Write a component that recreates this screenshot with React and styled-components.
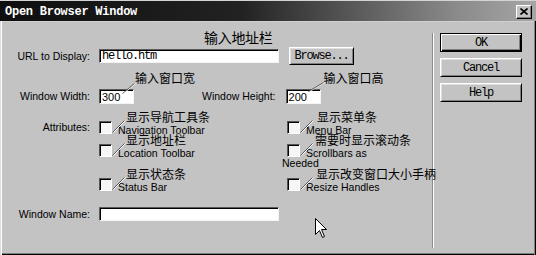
import React from "react";
import styled, { createGlobalStyle } from "styled-components";

const GlobalStyle = createGlobalStyle`
  html, body {
    margin: 0;
    padding: 0;
    background: #c3c3c3;
  }
  body {
    width: 536px;
    height: 255px;
    overflow: hidden;
  }
`;

const Window = styled.div`
  position: relative;
  width: 536px;
  height: 255px;
  display: flex;
  flex-direction: column;
  background: #c3c3c3;
  font-family: "Liberation Sans", Arial, sans-serif;
  font-size: 10.5px;
  color: #000;
  overflow: hidden;
`;

const TitleBar = styled.div`
  height: 21px;
  box-sizing: border-box;
  border-top: 1px solid #d4d4d4;
  background: linear-gradient(to right, #0e0e0e 0%, #222 45%, #8a8a8a 85%, #a6a6a6 100%);
  display: flex;
  align-items: center;
  justify-content: space-between;
  padding: 1px 4px 0 5px;
`;

const Title = styled.span`
  color: #fff;
  font-family: "Liberation Mono", "Courier New", monospace;
  font-weight: bold;
  font-size: 12px;
  letter-spacing: -0.25px;
`;

const CloseButton = styled.div`
  width: 16px;
  height: 14px;
  box-sizing: border-box;
  background: #c3c3c3;
  border: 1px solid;
  border-color: #fff #000 #000 #fff;
  box-shadow: inset -1px -1px #808080;
  display: flex;
  align-items: center;
  justify-content: center;
`;

const Body = styled.div`
  flex: 1;
  display: flex;
  box-shadow: inset 1px 0 #dcdcdc, inset 2px 0 #fff, inset -1px 0 #000,
    inset -2px 0 #808080, inset 0 -1px #000, inset 0 -2px #808080,
    inset 0 1px #d0d0d0;
`;

const Form = styled.div`
  width: 432px;
  box-sizing: border-box;
  padding-top: 26px;
`;

const Row = styled.div`
  display: flex;
  align-items: ${(p) => (p.$start ? "flex-start" : "center")};
  height: ${(p) => (p.$h ? `${p.$h}px` : "auto")};
  margin-top: ${(p) => p.$top || 0}px;
`;

const Label = styled.span`
  width: ${(p) => (p.$inline ? "auto" : "90px")};
  text-align: right;
  margin-left: ${(p) => p.$left || 0}px;
  margin-right: ${(p) => p.$right ?? 9}px;
  line-height: 13px;
  white-space: nowrap;
`;

const Field = styled.div`
  position: relative;
  width: ${(p) => p.$w}px;
  height: ${(p) => p.$h}px;
  box-sizing: border-box;
  background: #fff;
  border: 1px solid;
  border-color: #5a5a5a #f4f4f4 #f4f4f4 #5a5a5a;
  box-shadow: inset 1px 1px #000;
  padding: 0 0 0 2px;
  display: flex;
  align-items: center;
  font-family: ${(p) =>
    p.$mono ? '"Liberation Mono", "Courier New", monospace' : '"Liberation Sans", Arial, sans-serif'};
  font-size: ${(p) => (p.$mono ? "12px" : "11px")};
  letter-spacing: ${(p) => (p.$mono ? "-1.2px" : "0")};
`;

const Button = styled.div`
  width: ${(p) => p.$w}px;
  height: ${(p) => p.$h}px;
  box-sizing: border-box;
  background: #c3c3c3;
  border: 1px solid;
  border-color: ${(p) => (p.$default ? "#000" : "#fff #000 #000 #fff")};
  box-shadow: ${(p) =>
    p.$default
      ? "inset 1px 1px #fff, inset -1px -1px #000, inset -2px -2px #808080"
      : "inset 1px 1px #dfdfdf, inset -1px -1px #808080"};
  display: flex;
  align-items: center;
  justify-content: center;
  font-family: "Liberation Mono", "Courier New", monospace;
  font-size: 12px;
  letter-spacing: -1.2px;
  margin-left: ${(p) => p.$left || 0}px;
`;

const Note = styled.span`
  position: absolute;
  left: ${(p) => p.$x}px;
  top: ${(p) => p.$y}px;
  font-family: "Noto Sans CJK SC", sans-serif;
  font-size: ${(p) => p.$size || 12}px;
  line-height: 1;
  letter-spacing: ${(p) => (p.$size ? "-0.3px" : "0")};
  white-space: nowrap;
  color: #000;
`;

const Leader = styled.svg`
  position: absolute;
  left: ${(p) => p.$x}px;
  top: ${(p) => p.$y}px;
  overflow: visible;
`;

const AttrGrid = styled.div`
  display: grid;
  grid-template-columns: 188px 110px;
  grid-template-rows: 23px 34px 14px;
  margin-left: -5px;
`;

const Cell = styled.div`
  position: relative;
  padding-top: 4px;
  line-height: 10px;
  align-self: start;
`;

const Check = styled.span`
  float: left;
  width: 13px;
  height: 13px;
  box-sizing: border-box;
  margin: -4px 6px 0 5px;
  background: #f6f6f6;
  border: 1px solid;
  border-color: #555 #fff #fff #555;
  box-shadow: inset 1px 1px #000;
`;

const Separator = styled.div`
  width: 1px;
  height: 215px;
  margin-top: 12px;
  background: #8a8a8a;
  border-right: 1px solid #fff;
`;

const Buttons = styled.div`
  display: flex;
  flex-direction: column;
  gap: 6px;
  padding-top: 12px;
  margin-left: 6px;
`;

const Pointer = styled.svg`
  position: absolute;
  left: 315px;
  top: 218px;
`;

const LeaderLine = ({ x, y, w, h }) => (
  <Leader $x={x} $y={y} width={w} height={h}>
    <line x1={1.5} y1={h - 0.5} x2={w + 0.5} y2={0.5} stroke="#fff" strokeWidth="1" />
    <line x1={0.5} y1={h - 0.5} x2={w - 0.5} y2={0.5} stroke="#5a5a5a" strokeWidth="1" />
  </Leader>
);

const Attr = ({ note, children, noteX }) => (
  <Cell>
    <Check />
    <LeaderLine x={18} y={-1} w={13} h={13} />
    <Note $x={noteX} $y={-10}>
      {note}
    </Note>
    {children}
  </Cell>
);

export default function App() {
  return (
    <Window>
      <GlobalStyle />
      <TitleBar>
        <Title>Open Browser Window</Title>
        <CloseButton>
          <svg width="8" height="7" viewBox="0 0 8 7">
            <path d="M0.5 0.5 L7.5 6.5 M7.5 0.5 L0.5 6.5" stroke="#000" strokeWidth="1.6" />
          </svg>
        </CloseButton>
      </TitleBar>
      <Body>
        <Form>
          <Row $h={18}>
            <Label>URL to Display:</Label>
            <Field $w={180} $h={14} $mono>
              hello.htm
              <Note $x={104} $y={-20} $size={14}>
                输入地址栏
              </Note>
            </Field>
            <Button $w={65} $h={18} $left={10}>
              Browse...
            </Button>
          </Row>
          <Row $h={15} $top={24}>
            <Label>Window Width:</Label>
            <Field $w={35} $h={15}>
              300
              <Note $x={35} $y={-18}>
                输入窗口宽
              </Note>
              <LeaderLine x={22} y={-7} w={13} h={11} />
            </Field>
            <Label $inline $left={68} $right={10}>
              Window Height:
            </Label>
            <Field $w={35} $h={15}>
              200
              <Note $x={37} $y={-18}>
                输入窗口高
              </Note>
              <LeaderLine x={21} y={-8} w={16} h={10} />
            </Field>
          </Row>
          <Row $top={17} $start>
            <Label>Attributes:</Label>
            <AttrGrid>
              <Attr note="显示导航工具条" noteX={32}>
                Navigation Toolbar
              </Attr>
              <Attr note="显示菜单条" noteX={35}>
                Menu Bar
              </Attr>
              <Attr note="显示地址栏" noteX={32}>
                Location Toolbar
              </Attr>
              <Attr note="需要时显示滚动条" noteX={33}>
                Scrollbars as Needed
              </Attr>
              <Attr note="显示状态条" noteX={32}>
                Status Bar
              </Attr>
              <Attr note="显示改变窗口大小手柄" noteX={34}>
                Resize Handles
              </Attr>
            </AttrGrid>
          </Row>
          <Row $h={14} $top={15}>
            <Label>Window Name:</Label>
            <Field $w={180} $h={14} />
          </Row>
        </Form>
        <Separator />
        <Buttons>
          <Button $w={82} $h={19} $default>
            OK
          </Button>
          <Button $w={82} $h={19}>
            Cancel
          </Button>
          <Button $w={82} $h={19}>
            Help
          </Button>
        </Buttons>
      </Body>
      <Pointer width="13" height="21" viewBox="0 0 13 21">
        <path
          d="M0.5 0.5 L0.5 16.5 L4.5 12.5 L7.5 19.5 L9.5 18.5 L6.5 11.5 L11.5 11.5 Z"
          fill="#fff"
          stroke="#000"
          strokeWidth="1"
        />
      </Pointer>
    </Window>
  );
}
